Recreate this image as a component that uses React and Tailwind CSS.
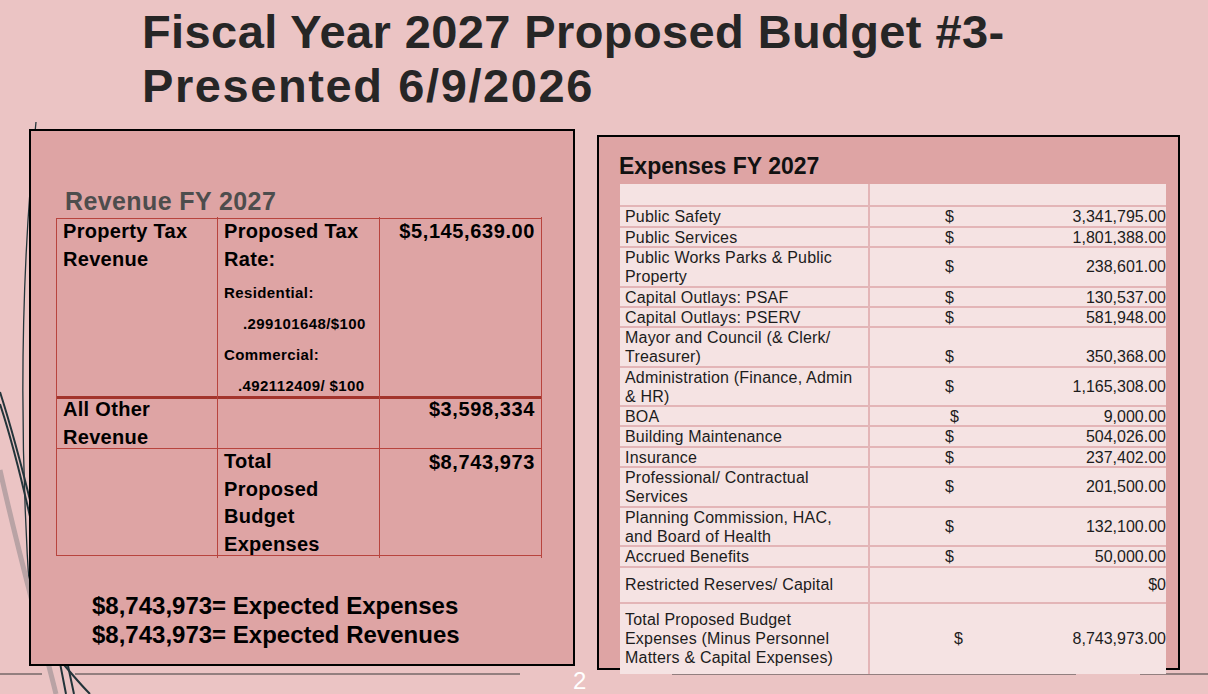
import React from "react";

const expenses = [
  { label: ["Public Safety"], amount: "3,341,795.00", h: "h-[21px]" },
  { label: ["Public Services"], amount: "1,801,388.00", h: "h-[20px]" },
  { label: ["Public Works Parks & Public", "Property"], amount: "238,601.00", h: "h-[40px]" },
  { label: ["Capital Outlays: PSAF"], amount: "130,537.00", h: "h-[20px]" },
  { label: ["Capital Outlays: PSERV"], amount: "581,948.00", h: "h-[20px]" },
  { label: ["Mayor and Council (& Clerk/", "Treasurer)"], amount: "350,368.00", h: "h-[40px]", bottom: true },
  { label: ["Administration (Finance, Admin", "& HR)"], amount: "1,165,308.00", h: "h-[39px]" },
  { label: ["BOA"], amount: "9,000.00", h: "h-[20px]", sign: "pl-[80px]" },
  { label: ["Building Maintenance"], amount: "504,026.00", h: "h-[21px]" },
  { label: ["Insurance"], amount: "237,402.00", h: "h-[20px]" },
  { label: ["Professional/ Contractual", "Services"], amount: "201,500.00", h: "h-[40px]" },
  { label: ["Planning Commission, HAC,", "and Board of Health"], amount: "132,100.00", h: "h-[39px]" },
  { label: ["Accrued Benefits"], amount: "50,000.00", h: "h-[21px]" },
  { label: ["Restricted Reserves/ Capital"], amount: "$0", h: "h-[36px]", noSign: true },
  {
    label: ["Total Proposed Budget", "Expenses (Minus Personnel", "Matters & Capital Expenses)"],
    amount: "8,743,973.00",
    h: "h-[70px]",
    sign: "pl-[84px]",
  },
];

const Decor = () => (
  <svg className="absolute inset-0 pointer-events-none" width="1208" height="694" viewBox="0 0 1208 694">
    <path d="M36 122 C22 260 18 420 30 600" stroke="#23343a" strokeWidth="1.3" fill="none" />
    <path d="M0 470 C20 560 40 630 56 694" stroke="#b9a3a5" strokeWidth="5" fill="none" />
    <path d="M0 392 C25 470 50 580 74 694" stroke="#23343a" strokeWidth="2" fill="none" />
    <path d="M0 404 C25 480 46 590 66 694" stroke="#23343a" strokeWidth="2" fill="none" />
    <path d="M60 660 C70 672 80 684 90 694" stroke="#23343a" strokeWidth="2" fill="none" />
    <line x1="0" y1="674" x2="42" y2="674" stroke="#3a3a3a" strokeWidth="1" />
    <line x1="75" y1="674" x2="520" y2="674" stroke="#3a3a3a" strokeWidth="1" />
    <line x1="672" y1="674" x2="1076" y2="674" stroke="#3a3a3a" strokeWidth="1" />
    <line x1="1140" y1="674" x2="1208" y2="674" stroke="#3a3a3a" strokeWidth="1" />
  </svg>
);

const cell = "border-r border-[#b8443e] pl-[6px] overflow-visible";

export default function App() {
  return (
    <div className="relative w-[1208px] h-[694px] overflow-hidden bg-[#ebc4c4] font-['Liberation_Sans',Arial,sans-serif]">
      <Decor />

      <h1 className="relative pl-[142px] pt-[5px] text-[47px] leading-[54px] font-bold text-[#262626] tracking-[0.4px]">
        Fiscal Year 2027 Proposed Budget #3-
        <br />
        <span className="tracking-[1.6px]">Presented 6/9/2026</span>
      </h1>

      <div className="relative flex items-start mt-[16px]">
        {/* Revenue panel */}
        <div className="ml-[29px] w-[546px] h-[537px] border-2 border-black bg-[#dea4a4] pt-[55px] pl-[25px]">
          <div className="pl-[9px] h-[32px] text-[25px] leading-[30px] font-bold text-[#4d4d4d] tracking-[0.4px]">
            Revenue FY 2027
          </div>
          <div className="w-[486px] border-l border-t border-[#b8443e] text-[20px] font-bold text-black leading-[28px] tracking-[0.3px]">
            <div className="grid grid-cols-[161px_162px_162px] h-[180px] border-b-[3px] border-[#a3342c]">
              <div className={`${cell} -mt-[2px]`}>
                Property Tax
                <br />
                Revenue
              </div>
              <div className={`${cell} -mt-[2px]`}>
                Proposed Tax
                <br />
                Rate:
                <div className="mt-[4px] text-[15px] leading-[31px] tracking-[0.4px]">
                  <div>Residential:</div>
                  <div className="pl-[19px]">.299101648/$100</div>
                  <div>Commercial:</div>
                  <div className="pl-[14px]">.492112409/ $100</div>
                </div>
              </div>
              <div className="border-r border-[#b8443e] pr-[6px] -mt-[2px] text-right tracking-[0.6px]">$5,145,639.00</div>
            </div>
            <div className="grid grid-cols-[161px_162px_162px] h-[50px] border-b border-[#b8443e]">
              <div className={`${cell} -mt-[4px]`}>
                All Other
                <br />
                Revenue
              </div>
              <div className={cell} />
              <div className="border-r border-[#b8443e] pr-[6px] text-right tracking-[0.6px] -mt-[4px]">$3,598,334</div>
            </div>
            <div className="grid grid-cols-[161px_162px_162px] h-[107px] border-b border-[#b8443e]">
              <div className={cell} />
              <div className={`${cell} leading-[27.6px] -mt-[1px]`}>
                Total
                <br />
                Proposed
                <br />
                Budget
                <br />
                Expenses
              </div>
              <div className="border-r border-[#b8443e] pr-[6px] text-right tracking-[0.6px] -mt-[1px]">$8,743,973</div>
            </div>
          </div>
          <div className="mt-[35px] pl-[36px] text-[24px] leading-[29px] font-bold text-black">
            <div>$8,743,973= Expected Expenses</div>
            <div>$8,743,973= Expected Revenues</div>
          </div>
        </div>

        {/* Expenses panel */}
        <div className="ml-[22px] mt-[6px] w-[583px] h-[535px] border-2 border-black bg-[#dea4a4] flex flex-col">
          <div className="h-[47px] pl-[20px] flex items-center pt-[12px] text-[23px] font-bold text-[#111]">
            Expenses FY 2027
          </div>
          <div className="relative ml-[21px] w-[546px] bg-[#f5e3e3] text-[16px] leading-[19px] tracking-[0.2px] text-[#1c1c1c] -mb-[5px]">
            <div className="grid grid-cols-[250px_1fr] h-[23px] border-b-2 border-[#e3b5b7]">
              <div className="border-r-2 border-[#e3b5b7]" />
              <div />
            </div>
            {expenses.map((row, i) => (
              <div
                key={i}
                className={`grid grid-cols-[250px_1fr] ${row.h} ${i < expenses.length - 1 ? "border-b-2 border-[#e3b5b7]" : ""}`}
              >
                <div className="border-r-2 border-[#e3b5b7] pl-[5px] flex flex-col justify-center">
                  {row.label.map((l) => (
                    <div key={l} className="whitespace-nowrap">{l}</div>
                  ))}
                </div>
                <div className={`flex ${row.bottom ? "items-end" : "items-center"}`}>
                  {!row.noSign && <span className={row.sign || "pl-[75px]"}>$</span>}
                  <span className="ml-auto tracking-normal">{row.amount}</span>
                </div>
              </div>
            ))}
          </div>
        </div>
      </div>

      <div className="absolute left-[573px] top-[668px] text-[24px] leading-[26px] font-light text-white">2</div>
    </div>
  );
}
